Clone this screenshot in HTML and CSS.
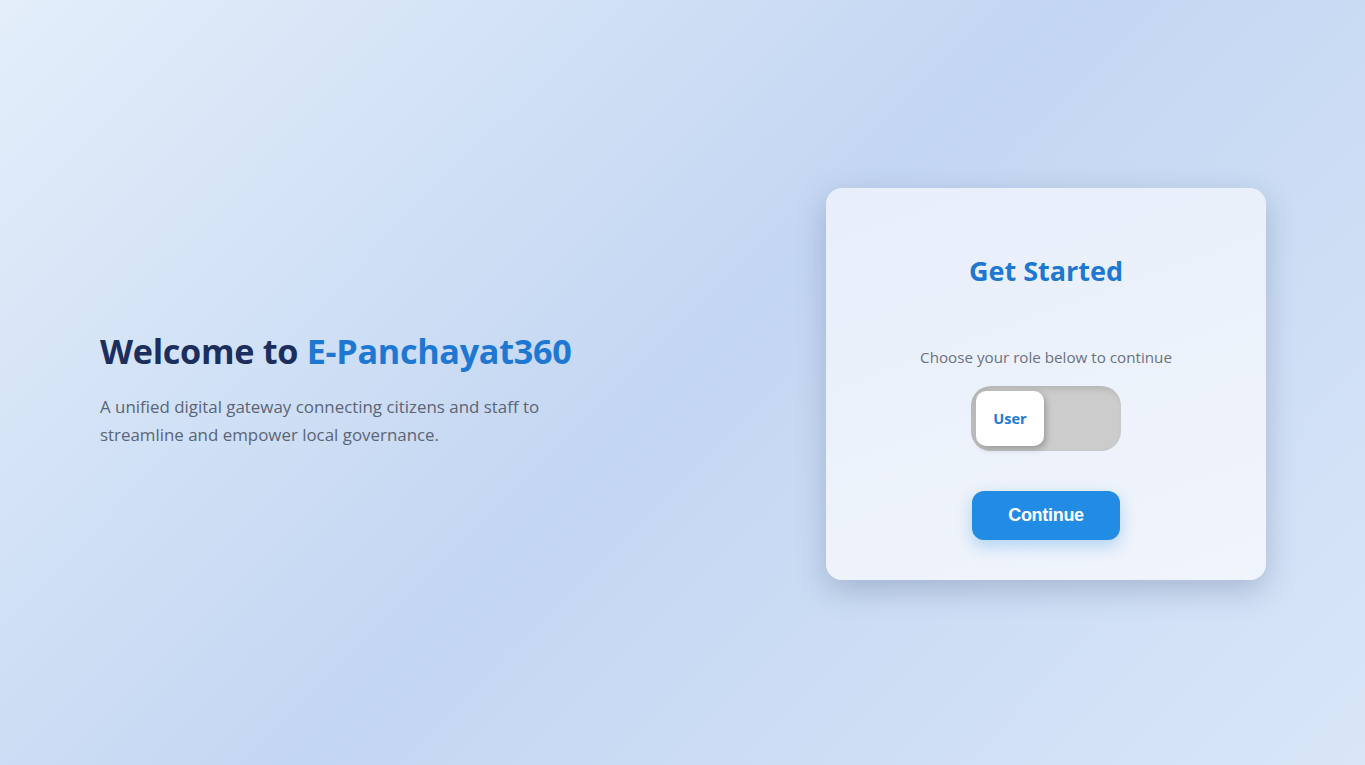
FILE: index.html
```html
<!DOCTYPE html>
<html lang="en">
<head>
<meta charset="utf-8">
<title>E-Panchayat360</title>
<link rel="stylesheet" href="styles.css">
</head>
<body>
<main class="page">
  <section class="intro">
    <h1 class="intro-title">Welcome to <span class="brand">E-Panchayat360</span></h1>
    <p class="intro-text">A unified digital gateway connecting citizens and staff to<br>streamline and empower local governance.</p>
  </section>
  <section class="card">
    <h2 class="card-title">Get Started</h2>
    <p class="card-sub">Choose your role below to continue</p>
    <div class="toggle">
      <div class="knob">User</div>
    </div>
    <button class="btn">Continue</button>
  </section>
</main>
</body>
</html>
```
FILE: styles.css
```css
* { box-sizing: border-box; }
html, body { margin: 0; height: 100%; }
body {
  font-family: "Open Sans", "Noto Sans", sans-serif;
  background: linear-gradient(135deg, #e3eefa 0%, #c3d6f2 50%, #d9e6f8 100%);
  min-height: 765px;
}
.page {
  height: 765px;
  display: flex;
  align-items: center;
  justify-content: space-between;
  padding: 0 99px 0 100px;
}
.intro { margin-top: 10px; }
.intro-title {
  margin: 0 0 19px;
  font-size: 34.2px;
  font-weight: 700;
  color: #1c2f5c;
  letter-spacing: -0.3px;
}
.brand { color: #1e78d2; }
.intro-text {
  margin: 0;
  font-size: 16.9px;
  line-height: 28px;
  color: #5b6576;
}
.card {
  width: 440px;
  height: 392px;
  margin-top: 2px;
  border-radius: 16px;
  background: linear-gradient(160deg, #e8effb 0%, #f0f4fb 100%);
  box-shadow: 0 10px 30px rgba(60, 80, 120, 0.28);
  display: flex;
  flex-direction: column;
  align-items: center;
  padding-top: 65px;
}
.card-title {
  margin: 0;
  font-size: 27px;
  font-weight: 700;
  color: #1e78d2;
  line-height: 36px;
}
.card-sub {
  margin: 58px 0 0;
  font-size: 15.2px;
  color: #6b7280;
  line-height: 20px;
}
.toggle {
  margin-top: 19px;
  width: 150px;
  height: 65px;
  border-radius: 20px;
  background: #cccccc;
  box-shadow: inset 3px 3px 6px rgba(0,0,0,0.12);
  padding: 5px;
  display: flex;
}
.knob {
  width: 68px;
  height: 55px;
  border-radius: 10px;
  background: #ffffff;
  box-shadow: 2px 3px 6px rgba(0,0,0,0.25);
  display: flex;
  align-items: center;
  justify-content: center;
  font-size: 14.5px;
  font-weight: 700;
  color: #1e78d2;
}
.btn {
  margin-top: 40px;
  width: 148px;
  height: 49px;
  border: none;
  border-radius: 12px;
  background: #228ce5;
  color: #ffffff;
  font-family: "Liberation Sans", Arial, sans-serif;
  font-size: 18px;
  font-weight: 700;
  letter-spacing: -0.3px;
  box-shadow: 0 6px 16px rgba(34, 140, 229, 0.3);
}
```
